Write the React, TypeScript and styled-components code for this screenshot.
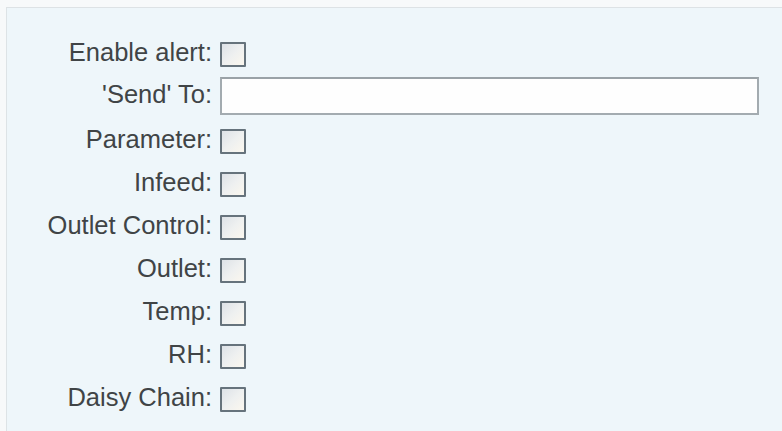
import React from "react";
import styled, { createGlobalStyle } from "styled-components";

const Global = createGlobalStyle`
  html, body { margin: 0; padding: 0; background: #f7f9fa; }
  body { font-family: "Liberation Sans", Arial, sans-serif; }
`;

const Page = styled.div`
  width: 782px;
  height: 431px;
  overflow: hidden;
  padding: 7px 0 0 6px;
  box-sizing: border-box;
`;

const Panel = styled.div`
  height: 100%;
  border-top: 1px solid #dde2e5;
  border-left: 1px solid #dde3e6;
  background: #eef6fa;
  padding-top: 24.5px;
  box-sizing: border-box;
  display: flex;
  flex-direction: column;
`;

const Row = styled.div<{ $h: number; $mb?: number }>`
  display: grid;
  grid-template-columns: 205px 539px;
  column-gap: 8px;
  align-items: center;
  height: ${(p) => p.$h}px;
  margin-bottom: ${(p) => p.$mb ?? 0}px;
`;

const Label = styled.label`
  text-align: right;
  font-size: 25.5px;
  color: #404446;
  white-space: nowrap;
  padding-bottom: 4px;
`;

const Box = styled.span`
  display: block;
  width: 26px;
  height: 25px;
  box-sizing: border-box;
  border: 2px solid #66737c;
  border-radius: 1px;
  background: linear-gradient(135deg, #dde2e7 0%, #eef0f0 50%, #fbf7ee 100%);
`;

const TextInput = styled.input`
  display: block;
  width: 539px;
  height: 38px;
  box-sizing: border-box;
  border: 2px solid #a3abb0;
  border-top-color: #9aa2a7;
  background: #fefefe;
  outline: none;
  font-size: 20px;
  font-family: "Liberation Sans", Arial, sans-serif;
`;

const items = [
  "Parameter:",
  "Infeed:",
  "Outlet Control:",
  "Outlet:",
  "Temp:",
  "RH:",
  "Daisy Chain:",
];

export default function App() {
  return (
    <>
      <Global />
      <Page>
        <Panel>
          <Row $h={43}>
            <Label>Enable alert:</Label>
            <Box />
          </Row>
          <Row $h={41} $mb={3.5}>
            <Label>'Send' To:</Label>
            <TextInput type="text" />
          </Row>
          {items.map((t) => (
            <Row $h={43} key={t}>
              <Label>{t}</Label>
              <Box />
            </Row>
          ))}
        </Panel>
      </Page>
    </>
  );
}
